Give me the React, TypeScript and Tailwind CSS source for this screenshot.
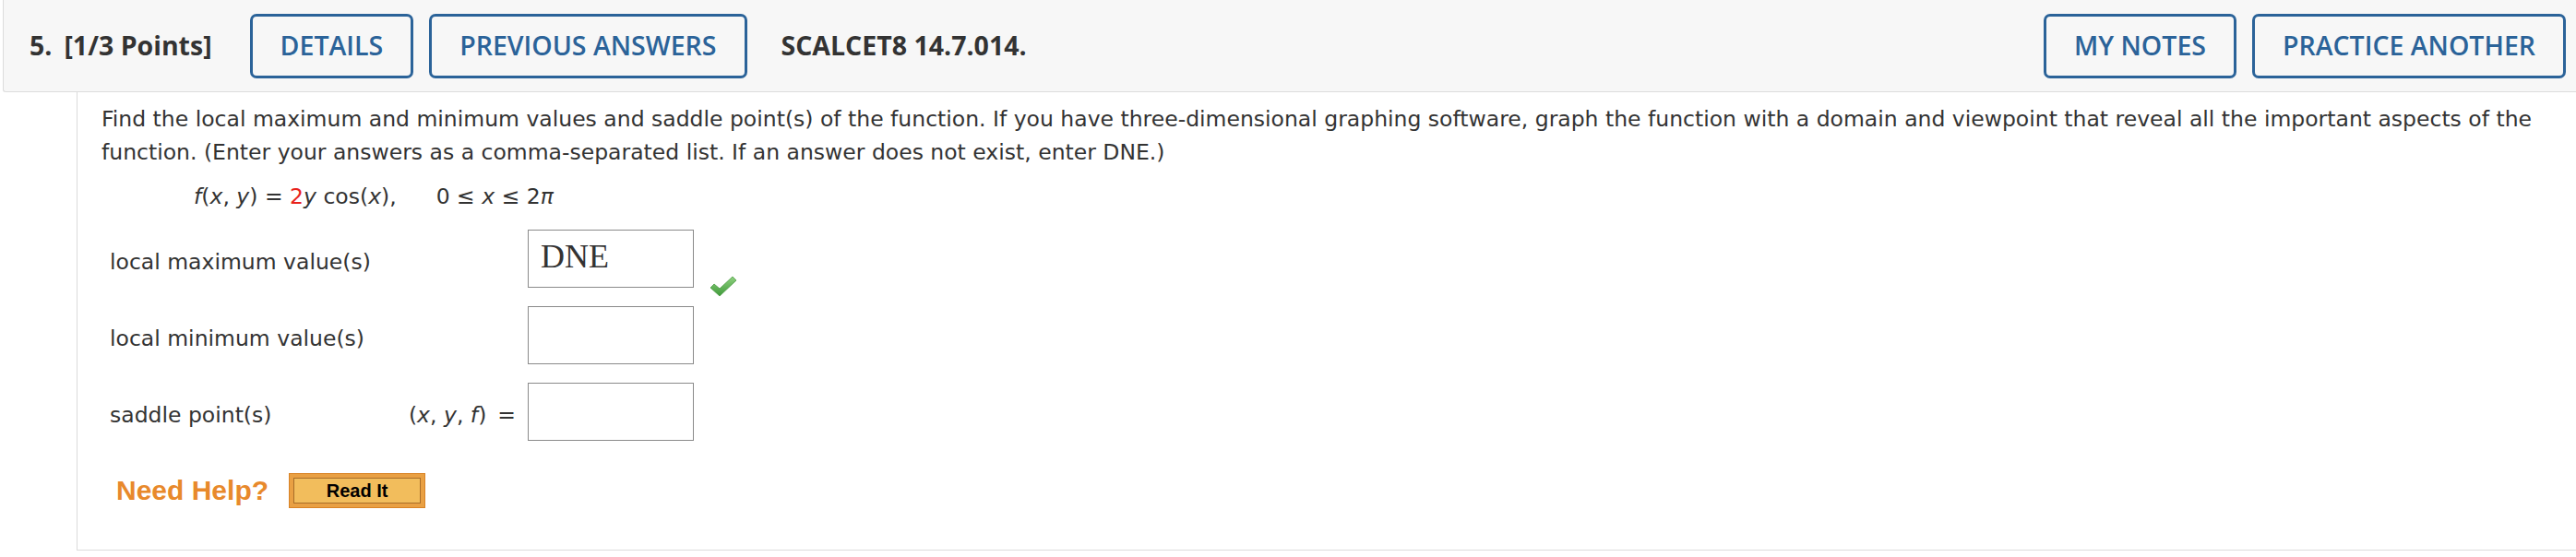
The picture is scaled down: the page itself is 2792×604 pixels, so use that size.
import React from "react";

const BODY = { fontFamily: '"DejaVu Sans", Verdana, sans-serif' };
const HEAD = { fontFamily: '"Open Sans", "Liberation Sans", sans-serif' };
const ARIAL = { fontFamily: '"Liberation Sans", Arial, sans-serif' };

function HeadButton({ label }: { label: string }) {
  return (
    <div className="h-[70px] px-[30px] flex items-center rounded-[7px] border-[3px] border-[#2b6399] text-[#2b6399] text-[28.5px] font-semibold bg-[#f7f7f7]">
      {label}
    </div>
  );
}

function AnswerBox({ value }: { value?: string }) {
  return (
    <div className="w-[180px] h-[63px] border border-[#8a8a8a] bg-white flex items-center pl-[13px] pb-[6px] text-[36px] text-[#333]" style={{ fontFamily: '"Liberation Serif", "Times New Roman", serif' }}>
      {value}
    </div>
  );
}

function CheckMark() {
  return (
    <svg width="30" height="24" viewBox="0 0 30 24">
      <defs>
        <linearGradient id="ck" x1="0" y1="0" x2="0" y2="1">
          <stop offset="0" stopColor="#8fd17f" />
          <stop offset="1" stopColor="#3f9a3a" />
        </linearGradient>
      </defs>
      <path d="M1 13 L5 9 L11 14 L25 1 L29 5 L11 22 Z" fill="url(#ck)" stroke="#4a9a42" strokeWidth="0.8" strokeLinejoin="round" />
    </svg>
  );
}

export default function App() {
  return (
    <div className="w-[2792px] h-[604px] bg-white overflow-hidden">
      {/* question header */}
      <div className="ml-[3px] h-[100px] bg-[#f7f7f7] border-l border-b border-[#dcdcdc] rounded-bl-[3px] flex items-center pl-[28px] pr-[11px] text-[#333]" style={HEAD}>
        <span className="text-[28.5px] font-bold">5.</span>
        <span className="ml-[13px] text-[28.5px] font-bold">[1/3 Points]</span>
        <div className="ml-[41px] flex gap-[17px]">
          <HeadButton label="DETAILS" />
          <HeadButton label="PREVIOUS ANSWERS" />
        </div>
        <span className="ml-[37px] text-[28.5px] font-bold">SCALCET8 14.7.014.</span>
        <div className="ml-auto flex gap-[17px]">
          <HeadButton label="MY NOTES" />
          <HeadButton label="PRACTICE ANOTHER" />
        </div>
      </div>

      {/* question body */}
      <div className="ml-[83px] h-[497px] border-l border-b border-[#dcdcdc] pl-[26px] pr-[30px] pt-[11px] text-[#333] text-[23.5px]" style={BODY}>
        <p className="leading-[36px]">
          Find the local maximum and minimum values and saddle point(s) of the function. If you have three-dimensional graphing software, graph the function with a domain and viewpoint that reveal all the important aspects of the function. (Enter your answers as a comma-separated list. If an answer does not exist, enter DNE.)
        </p>
        <p className="mt-[12px] ml-[100px] leading-[36px]">
          <i>f</i>(<i>x</i>, <i>y</i>) = <span className="text-[#e8231c]">2</span><i>y</i> cos(<i>x</i>),
          <span className="ml-[43px]">0 ≤ <i>x</i> ≤ 2<i>π</i></span>
        </p>

        <div className="mt-[18px] ml-[9px] grid grid-cols-[318px_135px_180px_auto] gap-y-[20px] items-center">
          <div className="col-span-2 pt-[8px]">local maximum value(s)</div>
          <AnswerBox value="DNE" />
          <div className="self-end -mb-[11px] ml-[17px]">
            <CheckMark />
          </div>

          <div className="col-span-2 pt-[8px]">local minimum value(s)</div>
          <AnswerBox />
          <div />

          <div className="pt-[8px]">saddle point(s)</div>
          <div className="text-right pr-[13px] pt-[8px]">
            (<i>x</i>, <i>y</i>, <i>f</i>)<span className="ml-[12px]">=</span>
          </div>
          <AnswerBox />
          <div />
        </div>

        <div className="mt-[31px] ml-[16px] flex items-center gap-[22px]">
          <span className="text-[30px] font-bold text-[#e8892b]" style={ARIAL}>
            Need Help?
          </span>
          <div className="w-[148px] h-[38px] border border-[#d98326] bg-[#e9a043] p-[4px]">
            <div className="w-full h-full border border-[#a86d28] bg-[#f2bd5c] flex items-center justify-center text-[20px] font-bold text-black" style={ARIAL}>
              Read It
            </div>
          </div>
        </div>
      </div>
    </div>
  );
}
